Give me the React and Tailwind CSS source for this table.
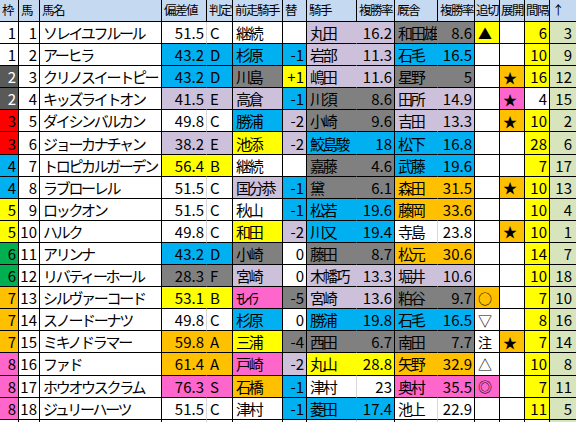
import React from 'react';

const COLS = 'grid grid-cols-[19px_21px_122px_45px_26px_50px_24px_50px_38px_43px_37px_25px_25px_25px_27px]';

const BG = {
  w: 'bg-white',
  g: 'bg-[#808080]',
  b: 'bg-[#00b0f0]',
  l: 'bg-[#ccc0da]',
  y: 'bg-[#ffff00]',
  o: 'bg-[#ffc000]',
  p: 'bg-[#ff66cc]',
};

const WAKU = {
  1: 'bg-white',
  2: 'bg-[#595959]',
  3: 'bg-[#ff0000]',
  4: 'bg-[#00b0f0]',
  5: 'bg-[#ffff00]',
  6: 'bg-[#00b050]',
  7: 'bg-[#ffc000]',
  8: 'bg-[#ff66cc]',
};

// waku, num, name, dev, judge, devC, prev, prevC, chg, chgC, jockey, jRate, jC, trainer, tRate, tC, oikiri, oC, tenkai, tkC, interval, ivC, up
const rows = [
  [1, 1, 'ソレイユフルール', '51.5', 'C', 'w', '継続', 'w', '', 'w', '丸田', '16.2', 'l', '和田雄', '8.6', 'g', '▲', 'y', '', 'w', '6', 'y', '3'],
  [1, 2, 'アーヒラ', '43.2', 'D', 'b', '杉原', 'b', '-1', 'b', '岩部', '11.3', 'l', '石毛', '16.5', 'b', '', 'w', '', 'w', '10', 'y', '9'],
  [2, 3, 'クリノスイートピー', '43.2', 'D', 'b', '川島', 'g', '+1', 'y', '嶋田', '11.6', 'l', '星野', '5', 'g', '', 'w', '★', 'o', '16', 'y', '12'],
  [2, 4, 'キッズライトオン', '41.5', 'E', 'l', '高倉', 'l', '-1', 'b', '川須', '8.6', 'g', '田所', '14.9', 'l', '', 'w', '★', 'p', '4', 'w', '15'],
  [3, 5, 'ダイシンバルカン', '49.8', 'C', 'w', '勝浦', 'b', '-2', 'l', '小崎', '9.6', 'g', '吉田', '13.3', 'l', '', 'w', '★', 'o', '10', 'y', '2'],
  [3, 6, 'ジョーカナチャン', '38.2', 'E', 'l', '池添', 'y', '-2', 'l', '鮫島駿', '18', 'b', '松下', '16.8', 'b', '', 'w', '', 'w', '28', 'y', '6'],
  [4, 7, 'トロピカルガーデン', '56.4', 'B', 'y', '継続', 'w', '', 'w', '嘉藤', '4.6', 'g', '武藤', '19.6', 'b', '', 'w', '', 'w', '7', 'y', '17'],
  [4, 8, 'ラブローレル', '51.5', 'C', 'w', '国分恭', 'l', '-1', 'b', '黛', '6.1', 'g', '森田', '31.5', 'o', '', 'w', '★', 'o', '10', 'y', '13'],
  [5, 9, 'ロックオン', '51.5', 'C', 'w', '秋山', 'w', '-1', 'b', '松若', '19.6', 'b', '藤岡', '33.6', 'o', '', 'w', '', 'w', '10', 'y', '4'],
  [5, 10, 'ハルク', '49.8', 'C', 'w', '和田', 'y', '-2', 'l', '川又', '19.4', 'b', '寺島', '23.8', 'w', '', 'w', '★', 'o', '10', 'y', '1'],
  [6, 11, 'アリンナ', '43.2', 'D', 'b', '小崎', 'g', '0', 'w', '藤田', '8.7', 'g', '松元', '30.6', 'o', '', 'w', '', 'w', '14', 'y', '7'],
  [6, 12, 'リバティーホール', '28.3', 'F', 'g', '宮崎', 'l', '0', 'w', '木幡巧', '13.3', 'l', '堀井', '10.6', 'l', '', 'w', '', 'w', '10', 'y', '18'],
  [7, 13, 'シルヴァーコード', '53.1', 'B', 'y', 'ﾓﾚｲﾗ', 'p', '-5', 'g', '宮崎', '13.6', 'l', '粕谷', '9.7', 'g', '○', 'o', '', 'w', '7', 'y', '10'],
  [7, 14, 'スノードーナツ', '49.8', 'C', 'w', '杉原', 'b', '0', 'w', '勝浦', '19.8', 'b', '石毛', '16.5', 'b', '▽', 'w', '', 'w', '8', 'y', '16'],
  [7, 15, 'ミキノドラマー', '59.8', 'A', 'o', '三浦', 'y', '-4', 'g', '西田', '6.7', 'g', '南田', '7.7', 'g', '注', 'w', '★', 'o', '7', 'y', '14'],
  [8, 16, 'ファド', '61.4', 'A', 'o', '戸崎', 'p', '-2', 'l', '丸山', '28.8', 'y', '矢野', '32.9', 'o', '△', 'w', '', 'w', '10', 'y', '8'],
  [8, 17, 'ホウオウスクラム', '76.3', 'S', 'p', '石橋', 'o', '-1', 'b', '津村', '23', 'w', '奥村', '35.5', 'p', '◎', 'p', '', 'w', '7', 'y', '11'],
  [8, 18, 'ジュリーハーツ', '51.5', 'C', 'w', '津村', 'w', '-1', 'b', '菱田', '17.4', 'b', '池上', '22.9', 'w', '', 'w', '', 'w', '11', 'y', '5'],
];

const headers = ['枠', '馬', '馬名', '偏差値', '判定', '前走騎手', '替', '騎手', '複勝率', '厩舎', '複勝率', '追切', '展開', '間隔', '↑'];

const Cell = ({ bg = 'bg-white', right = false, inner = false, className = '', children }) => {
  // inner: a split inside a merged-looking pair, only drawn as a light gridline on white
  const rLine = inner ? (bg === 'bg-white' ? 'border-r-[#d9d9d9]' : 'border-r-transparent') : 'border-r-black';
  return (
    <div
      className={`flex items-center h-full overflow-hidden whitespace-nowrap border-r border-b border-b-black ${rLine} ${bg} ${
        right ? 'justify-end pr-[2px]' : 'pl-[3px]'
      } ${className}`}
    >
      {children}
    </div>
  );
};

const jp = 'text-[15px] tracking-[-2.3px]';
const num = 'text-[15px]';

const App = () => {
  return (
    <div className="w-[576px] h-[422px] overflow-hidden bg-white text-black font-['Noto_Sans_CJK_JP',sans-serif] leading-none">
      <div className="w-[577px]">
        {/* Header */}
        <div className={`${COLS} h-[22px] bg-[#c5d9f1]`}>
          {headers.map((h, i) => (
            <Cell
              key={i}
              bg="bg-[#c5d9f1]"
              className={`text-[12.5px] tracking-[-1.5px] ${i >= 11 && i <= 13 ? '!pl-[1px]' : '!pl-[2px]'}`}
            >
              {h}
            </Cell>
          ))}
        </div>

        {rows.map((r) => {
          const [waku, n, name, dev, judge, devC, prev, prevC, chg, chgC, jk, jr, jC, tr, trr, tC, ok, oC, tk, tkC, iv, ivC, up] = r;
          return (
            <div key={n} className={`${COLS} h-[22.1px]`}>
              <Cell bg={WAKU[waku]} right className={`${num} ${waku === 2 ? 'text-white' : ''}`}>{waku}</Cell>
              <Cell right className={num}>{n}</Cell>
              <Cell className={jp}>{name}</Cell>
              <Cell bg={BG[devC]} right inner className={num}>{dev}</Cell>
              <Cell bg={BG[devC]} className={num}>{judge}</Cell>
              <Cell bg={BG[prevC]} className={jp}>{prev}</Cell>
              <Cell bg={BG[chgC]} right className={num}>{chg}</Cell>
              <Cell bg={BG[jC]} inner className={jp}>{jk}</Cell>
              <Cell bg={BG[jC]} right className={num}>{jr}</Cell>
              <Cell bg={BG[tC]} inner className={jp}>{tr}</Cell>
              <Cell bg={BG[tC]} right className={num}>{trr}</Cell>
              <Cell bg={BG[oC]} className="text-[14px]">{ok}</Cell>
              <Cell bg={BG[tkC]} className="text-[14px]">{tk}</Cell>
              <Cell bg={BG[ivC]} right className={num}>{iv}</Cell>
              <Cell bg="bg-[#d8e4bc]" right className={`${num} pr-[4px]`}>{up}</Cell>
            </div>
          );
        })}

        {/* next (cut off) row */}
        <div className={`${COLS} h-[22px]`}>
          {headers.map((_, i) => (
            <Cell key={i} bg={i === 14 ? 'bg-[#d8e4bc]' : 'bg-white'} inner={i === 3 || i === 7 || i === 9} />
          ))}
        </div>
      </div>
    </div>
  );
};

export default App;
